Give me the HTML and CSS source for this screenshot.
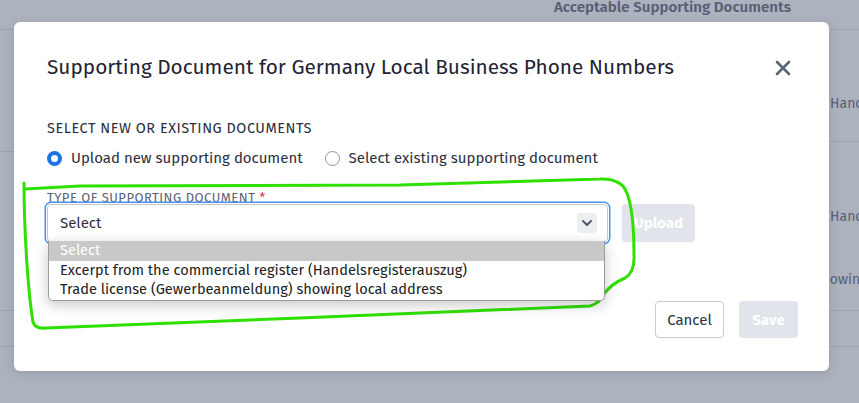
FILE: index.html
```html
<!DOCTYPE html>
<html lang="en">

<head>
  <meta charset="UTF-8">
  <meta name="viewport" content="width=device-width, initial-scale=1.0">
  <title>Supporting Documents</title>
  <link rel="stylesheet" href="styles.css">
</head>

<body>
<div class="page">
  <div class="page_col page_left">
    <div class="row row_head"></div>
    <div class="row" style="height: 122px"></div>
    <div class="row" style="height: 159px"></div>
    <div class="row" style="height: 36px"></div>
  </div>
  <div class="page_col page_right">
    <div class="row row_head"><span class="head_text">Acceptable Supporting Documents</span></div>
    <div class="row row_text" style="height: 112px; padding-top: 65px">
      <span>Handelsregisterauszug</span>
    </div>
    <div class="row row_text" style="height: 169px; padding-top: 66px">
      <span>Handelsregisterauszug</span>
      <span class="shift">showing local address</span>
    </div>
    <div class="row" style="height: 36px"></div>
  </div>
</div>

<div class="modal">
  <div class="modal_head">
    <h1 class="modal_title">Supporting Document for Germany Local Business Phone Numbers</h1>
    <button class="close_btn" aria-label="Close">
      <svg width="16" height="16" viewBox="0 0 16 16">
        <path d="M2 2 L14 14 M14 2 L2 14" stroke="#5b6478" stroke-width="2.6" stroke-linecap="round"/>
      </svg>
    </button>
  </div>

  <div class="section_label">Select new or existing documents</div>

  <div class="radios">
    <label class="radio">
      <span class="radio_dot checked"></span>
      Upload new supporting document
    </label>
    <label class="radio">
      <span class="radio_dot"></span>
      Select existing supporting document
    </label>
  </div>

  <div class="field_label">Type of supporting document <span class="req">*</span></div>

  <div class="select_row">
    <div class="select_wrap">
      <div class="select_box">
        <span>Select</span>
        <span class="chevron">
          <svg width="10" height="6" viewBox="0 0 10 6">
            <path d="M1 1 L5 5 L9 1" fill="none" stroke="#4b5366" stroke-width="1.8" stroke-linecap="round" stroke-linejoin="round"/>
          </svg>
        </span>
      </div>
      <ul class="options">
        <li class="active">Select</li>
        <li>Excerpt from the commercial register (Handelsregisterauszug)</li>
        <li>Trade license (Gewerbeanmeldung) showing local address</li>
      </ul>
    </div>
    <button class="btn btn_disabled btn_upload">Upload</button>
  </div>

  <div class="modal_foot">
    <button class="btn btn_cancel">Cancel</button>
    <button class="btn btn_disabled btn_save">Save</button>
  </div>
</div>

<!-- marker drawn over the screen -->
<svg class="marker" width="859" height="403" viewBox="0 0 859 403">
  <path d="M24,183 C24,230 28,292 33,322 Q35,329 46,328 L300,318 L590,306 Q600,303 604,294 Q611,284 625,278 Q635,272 634,255 C634,220 631,196 623,186 Q615,178 600,179 L400,185 Q250,185 80,186 L25,189"
        fill="none" stroke="#2fe000" stroke-width="3" stroke-linecap="round" stroke-linejoin="round"/>
</svg>
</body>

</html>
```

FILE: styles.css
```css
* {
    box-sizing: border-box;
}

body {
    margin: 0;
    width: 859px;
    height: 403px;
    overflow: hidden;
    background-color: #adb2bf;
    font-family: "Fira Sans", Lato, "Noto Sans", sans-serif;
    color: #1f2333;
}

/* dimmed page */

.page {
    display: flex;
    justify-content: space-between;
    height: 100%;
}

.page_col {
    display: flex;
    flex-direction: column;
}

.page_left {
    width: 60px;
}

.page_right {
    width: 320px;
}

.row {
    border-bottom: 1px solid #9da2b0;
}

.row_head {
    height: 30px;
    padding-left: 15px;
}

.head_text {
    display: block;
    margin-top: -2px;
    font-size: 15.1px;
    line-height: 18px;
    font-weight: 600;
    color: #586074;
}

.row_text {
    display: flex;
    flex-direction: column;
    gap: 45px;
    padding-left: 291px;
    font-size: 14px;
    line-height: 18px;
    color: #586074;
    white-space: nowrap;
    overflow: hidden;
}

.shift {
    margin-left: -15px;
}

/* modal */

.modal {
    position: absolute;
    left: 14px;
    top: 22px;
    width: 815px;
    height: 349px;
    background-color: #fff;
    border-radius: 6px;
    box-shadow: 0 2px 10px rgba(40, 45, 60, 0.18);
    padding: 31px 38px 0 33px;
}

.modal_head {
    display: flex;
    justify-content: space-between;
    align-items: center;
}

.modal_title {
    margin: 0;
    font-size: 20.8px;
    line-height: 30px;
    font-weight: 400;
    color: #1f2333;
}

.close_btn {
    border: none;
    background: none;
    padding: 0;
    width: 16px;
    height: 16px;
    display: flex;
}

.section_label {
    margin-top: 36px;
    font-size: 14.5px;
    line-height: 18px;
    letter-spacing: 0.5px;
    text-transform: uppercase;
    color: #2b2f3e;
}

.radios {
    display: flex;
    gap: 22px;
    margin-top: 11px;
}

.radio {
    display: flex;
    align-items: center;
    gap: 9px;
    font-size: 15px;
    line-height: 20px;
    color: #2b2f3e;
}

.radio_dot {
    width: 15px;
    height: 15px;
    border-radius: 50%;
    border: 1px solid #8f94a3;
    background-color: #fff;
}

.radio_dot.checked {
    border: 4.5px solid #1a73e8;
}

.field_label {
    margin-top: 22px;
    height: 14px;
    font-size: 13px;
    line-height: 16px;
    letter-spacing: 0.5px;
    text-transform: uppercase;
    color: #5c6374;
}

.req {
    color: #e0343a;
}

.select_row {
    display: flex;
    align-items: center;
    gap: 14px;
}

.select_wrap {
    position: relative;
    width: 561px;
}

.select_box {
    display: flex;
    justify-content: space-between;
    align-items: center;
    height: 38px;
    padding: 0 10px 0 12px;
    border: 1px solid #c3c6d1;
    border-radius: 4px;
    box-shadow: 0 0 0 1px #fff, 0 0 0 2.5px #4d90f5;
    background-color: #fff;
    font-size: 15px;
    color: #2b2f3e;
}

.chevron {
    width: 20px;
    height: 20px;
    border-radius: 3px;
    background-color: #eceef2;
    display: flex;
    align-items: center;
    justify-content: center;
}

.options {
    position: absolute;
    left: 1px;
    top: 37px;
    width: 557px;
    margin: 0;
    padding: 0;
    list-style: none;
    background-color: #fff;
    border: 1px solid #9b9b9b;
    border-top: none;
    border-radius: 0 0 5px 5px;
    box-shadow: 0 4px 14px rgba(0, 0, 0, 0.22);
    font-size: 14.6px;
    line-height: 19.5px;
    color: #222;
    z-index: 2;
}

.options li {
    padding-left: 11px;
}

.options li.active {
    background-color: #c8c8c8;
    color: #fff;
}

.btn {
    font-family: inherit;
    font-size: 15px;
    border-radius: 4px;
    padding: 0;
}

.btn_disabled {
    border: none;
    background-color: #e1e4eb;
    color: #fff;
    font-weight: 700;
}

.btn_upload {
    width: 73px;
    height: 38px;
}

.modal_foot {
    display: flex;
    justify-content: flex-end;
    gap: 15px;
    margin-top: 59px;
    margin-right: -7px;
}

.btn_cancel {
    width: 69px;
    height: 37px;
    border: 1px solid #c9ccd5;
    background-color: #fff;
    color: #2b2f3e;
}

.btn_save {
    width: 59px;
    height: 37px;
}

.marker {
    position: absolute;
    left: 0;
    top: 0;
    pointer-events: none;
}
```
